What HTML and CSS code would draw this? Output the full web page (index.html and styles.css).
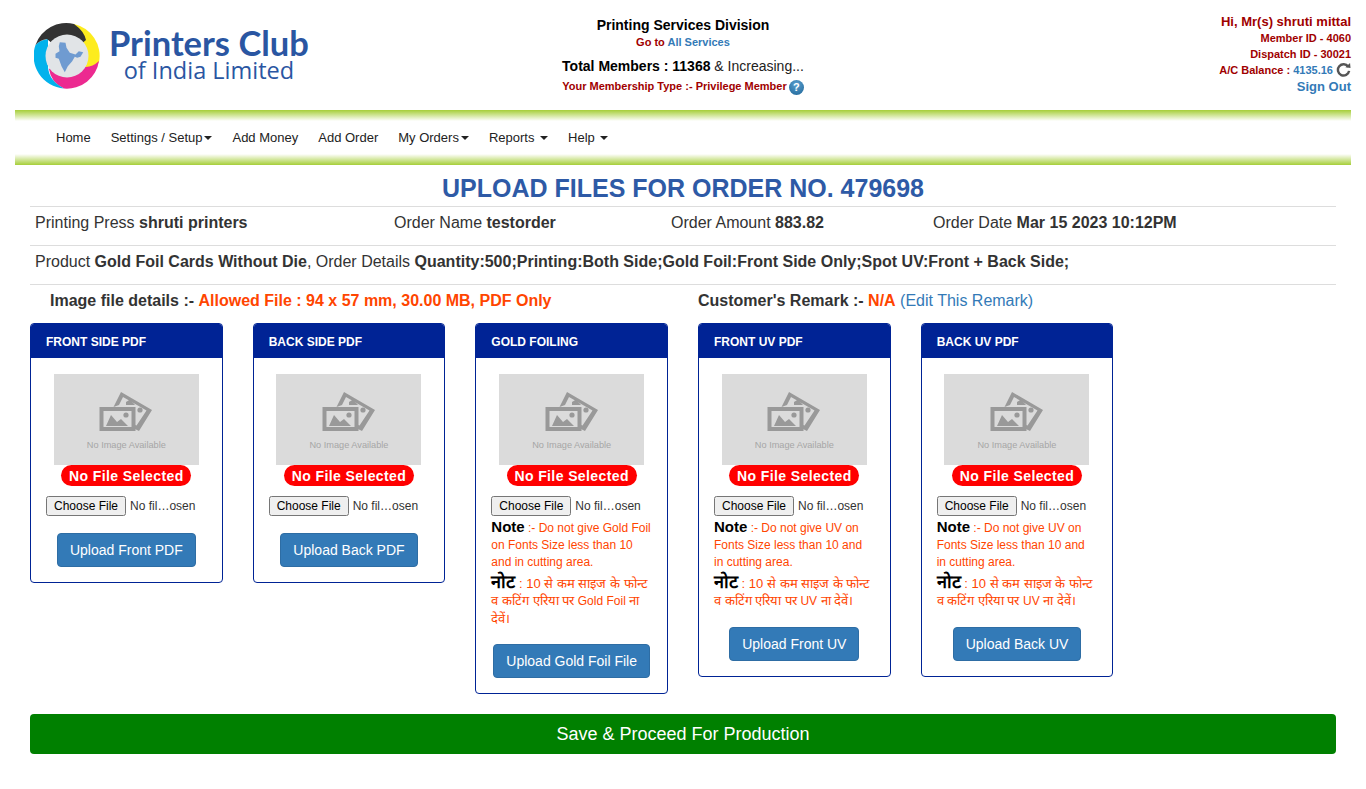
FILE: index.html
```html
<!DOCTYPE html>
<html lang="en">
<head>
  <meta charset="UTF-8">
  <meta name="viewport" content="width=device-width, initial-scale=1.0">
  <title>Upload Files</title>
  <link rel="stylesheet" href="styles.css">
</head>
<body>
  <svg class="defs" width="0" height="0">
    <symbol id="noimg" viewBox="0 0 54 42">
      <path d="M22 1 L53 19 L40 40 L36 38 L36 34 L37.5 34.5 L47.5 19.5 L24 6 L20 14 L14.5 16 Z" fill="#999"/>
      <path d="M27 11 L31 8.5 L36 14 H27 Z" fill="#999"/>
      <circle cx="41" cy="19" r="2.6" fill="#999"/>
      <path d="M0.5 16 H36.5 V40 H0.5 Z M4.5 20 V36 H32.5 V20 Z" fill="#999" fill-rule="evenodd"/>
      <path d="M7 35 L12 24 L18 31 L22 28 L29 35 Z" fill="#999"/>
      <circle cx="27" cy="24" r="2.6" fill="#999"/>
    </symbol>
  </svg>

  <header class="top">
    <a class="logo" href="#">
      <svg class="logo-mark" viewBox="0 0 66 66" width="66" height="66">
        <path d="M40 1 A32.5 32.5 0 0 1 65 39 Q60 48 48 50 L33 33 Z" fill="#fdec1e"/>
        <path d="M65 38 A32.5 32.5 0 0 1 30 65.5 Q17 60 15 46 L33 33 Q50 52 65 38 Z" fill="#ec2a90"/>
        <path d="M1.5 22 A32.5 32.5 0 0 0 30 65.4 Q15 58 14 44 L14 16 Q6 17 1.5 22 Z" fill="#02b2ec"/>
        <path d="M1.5 22 A32.5 32.5 0 0 1 40 1 Q50 8 52 17 L33 33 L13 16 Q6 17 1.5 22 Z" fill="#333"/>
        <circle cx="33" cy="33" r="21.5" fill="#e1e4e7"/>
        <path d="M25.8 19.2 L31.5 19.8 L32.5 24.8 L35.8 29.8 L41.5 31.5 L44.8 28.2 L49.2 29.2 L46.5 33.8 L43.2 34.8 L40.8 33.8 L38.2 38.2 L33.8 43.2 L30.8 49.2 L27.5 43.2 L24.8 35.8 L21.5 34.8 L21.5 30.8 L25.5 28.2 L24.8 23.2 Z" fill="#6f9bd1"/>
      </svg>
      <span class="logo-text">
        <span class="logo-name">Printers Club</span>
        <span class="logo-sub">of India Limited</span>
      </span>
    </a>

    <div class="top-center">
      <div class="division">Printing Services Division</div>
      <div class="goto">Go to <a href="#">All Services</a></div>
      <div class="members"><b>Total Members : 11368</b> &amp; Increasing...</div>
      <div class="memtype">Your Membership Type :- Privilege Member
        <span class="help">?</span>
      </div>
    </div>

    <div class="top-right">
      <div class="hi">Hi, Mr(s) shruti mittal</div>
      <div class="acct">Member ID - 4060</div>
      <div class="acct">Dispatch ID - 30021</div>
      <div class="acct">A/C Balance : <a href="#">4135.16</a>
        <svg class="refresh" viewBox="0 0 16 16" width="15" height="15">
          <path d="M13 5 A6 6 0 1 0 14 9.5" fill="none" stroke="#555" stroke-width="2.6"/>
          <path d="M10 5.5 L15.5 6.5 L15 1 Z" fill="#555"/>
        </svg>
      </div>
      <a class="signout" href="#">Sign Out</a>
    </div>
  </header>

  <nav class="menu">
    <a href="#">Home</a>
    <a class="tight" href="#">Settings / Setup<i class="caret"></i></a>
    <a href="#">Add Money</a>
    <a href="#">Add Order</a>
    <a class="tight" href="#">My Orders<i class="caret"></i></a>
    <a href="#">Reports <i class="caret"></i></a>
    <a href="#">Help <i class="caret"></i></a>
  </nav>

  <main class="content">
    <h1>UPLOAD FILES FOR ORDER NO. 479698</h1>

    <div class="info info-cols">
      <span>Printing Press <b>shruti printers</b></span>
      <span>Order Name <b>testorder</b></span>
      <span>Order Amount <b>883.82</b></span>
      <span>Order Date <b>Mar 15 2023 10:12PM</b></span>
    </div>
    <div class="info">
      Product <b>Gold Foil Cards Without Die</b>, Order Details <b>Quantity:500;Printing:Both Side;Gold Foil:Front Side Only;Spot UV:Front + Back Side;</b>
    </div>

    <div class="details">
      <div class="details-file"><b>Image file details :-</b> <strong>Allowed File : 94 x 57 mm, 30.00 MB, PDF Only</strong></div>
      <div><b>Customer's Remark :-</b> <strong>N/A</strong> <a href="#">(Edit This Remark)</a></div>
    </div>

    <div class="cards">
      <section class="card">
        <h2>FRONT SIDE PDF</h2>
        <div class="card-body">
          <div class="noimg"><svg width="54" height="42"><use href="#noimg"/></svg><span>No Image Available</span></div>
          <span class="badge">No File Selected</span>
          <input type="file" class="file">
          <button class="btn">Upload Front PDF</button>
        </div>
      </section>

      <section class="card">
        <h2>BACK SIDE PDF</h2>
        <div class="card-body">
          <div class="noimg"><svg width="54" height="42"><use href="#noimg"/></svg><span>No Image Available</span></div>
          <span class="badge">No File Selected</span>
          <input type="file" class="file">
          <button class="btn">Upload Back PDF</button>
        </div>
      </section>

      <section class="card">
        <h2>GOLD FOILING</h2>
        <div class="card-body">
          <div class="noimg"><svg width="54" height="42"><use href="#noimg"/></svg><span>No Image Available</span></div>
          <span class="badge">No File Selected</span>
          <input type="file" class="file">
          <p class="note"><b>Note</b> :- Do not give Gold Foil on Fonts Size less than 10 and in cutting area.</p>
          <p class="note note-hindi"><b>नोट</b> : 10 से कम साइज के फोन्ट व कटिंग एरिया पर <span>Gold Foil</span> ना देवें।</p>
          <button class="btn">Upload Gold Foil File</button>
        </div>
      </section>

      <section class="card">
        <h2>FRONT UV PDF</h2>
        <div class="card-body">
          <div class="noimg"><svg width="54" height="42"><use href="#noimg"/></svg><span>No Image Available</span></div>
          <span class="badge">No File Selected</span>
          <input type="file" class="file">
          <p class="note"><b>Note</b> :- Do not give UV on Fonts Size less than 10 and in cutting area.</p>
          <p class="note note-hindi"><b>नोट</b> : 10 से कम साइज के फोन्ट व कटिंग एरिया पर <span>UV</span> ना देवें।</p>
          <button class="btn">Upload Front UV</button>
        </div>
      </section>

      <section class="card">
        <h2>BACK UV PDF</h2>
        <div class="card-body">
          <div class="noimg"><svg width="54" height="42"><use href="#noimg"/></svg><span>No Image Available</span></div>
          <span class="badge">No File Selected</span>
          <input type="file" class="file">
          <p class="note"><b>Note</b> :- Do not give UV on Fonts Size less than 10 and in cutting area.</p>
          <p class="note note-hindi"><b>नोट</b> : 10 से कम साइज के फोन्ट व कटिंग एरिया पर <span>UV</span> ना देवें।</p>
          <button class="btn">Upload Back UV</button>
        </div>
      </section>
    </div>

    <button class="save">Save &amp; Proceed For Production</button>
  </main>
</body>
</html>
```

FILE: styles.css
```css
* {
  box-sizing: border-box;
}
body {
  margin: 0;
  font-family: "Liberation Sans", Arial, sans-serif;
  font-size: 14px;
  color: #333;
  background: #fff;
}
a {
  color: #337ab7;
  text-decoration: none;
}
.defs {
  position: absolute;
}

/* header */
.top {
  display: grid;
  grid-template-columns: 1fr auto 1fr;
  height: 110px;
  padding: 0 15px;
}
.logo {
  display: flex;
  align-items: flex-start;
  gap: 9px;
  padding: 23px 0 0 19px;
}
.logo-text {
  display: flex;
  flex-direction: column;
  align-items: center;
  color: #2a56a2;
}
.logo-name {
  margin-top: 2px;
  font-family: Lato, sans-serif;
  font-size: 34.5px;
  font-weight: 700;
  line-height: 36px;
}
.logo-sub {
  margin-top: -4px;
  font-family: "Open Sans", sans-serif;
  font-size: 23.5px;
  line-height: 26px;
}
.top-center {
  padding-top: 17px;
  text-align: center;
}
.division {
  font-weight: 700;
  color: #000;
  line-height: 16px;
}
.goto {
  margin-top: 2px;
  font-size: 11px;
  font-weight: 700;
  line-height: 14px;
  color: #a00000;
}
.members {
  margin-top: 8px;
  line-height: 18px;
  color: #222;
}
.members b {
  color: #000;
}
.memtype {
  margin-top: 3px;
  font-size: 11px;
  font-weight: 700;
  line-height: 16px;
  color: #a00000;
}
.help {
  display: inline-block;
  width: 15px;
  height: 15px;
  margin-left: -1px;
  border-radius: 50%;
  background: radial-gradient(circle at 50% 30%, #5aa0d0, #1d6496);
  color: #fff;
  font-size: 11px;
  line-height: 15px;
  vertical-align: middle;
}
.top-right {
  padding-top: 13px;
  text-align: right;
  font-weight: 700;
  font-size: 13px;
  color: #a00000;
}
.hi {
  line-height: 17px;
}
.acct {
  font-size: 11px;
  line-height: 16px;
}
.refresh {
  vertical-align: -3px;
}
.signout {
  display: block;
  line-height: 18px;
}

/* menu */
.menu {
  display: flex;
  height: 55px;
  margin: 0 15px;
  padding: 0 21px 1px 31px;
  align-items: center;
  font-size: 13px;
  background:
    linear-gradient(#a6ce39, #fff) top / 100% 11px no-repeat,
    linear-gradient(#fff, #a6ce39) bottom / 100% 11px no-repeat;
}
.menu a {
  padding: 0 10px;
  color: #222;
}
.caret {
  display: inline-block;
  margin-left: 2px;
  border-top: 4px solid #222;
  border-left: 4px solid transparent;
  border-right: 4px solid transparent;
  vertical-align: middle;
}

/* main */
.content {
  padding: 0 30px;
}
h1 {
  margin: 0;
  height: 41px;
  padding-top: 8px;
  font-size: 25px;
  line-height: 30px;
  text-align: center;
  color: #2e5aa6;
}
.info {
  height: 39px;
  padding: 7px 5px 0;
  border-top: 1px solid #ddd;
  font-size: 16px;
  line-height: 18px;
}
.info-cols {
  display: grid;
  grid-template-columns: 359px 277px 262px 1fr;
}
.details {
  display: grid;
  grid-template-columns: 668px 1fr;
  height: 39px;
  padding-top: 6px;
  border-top: 1px solid #ddd;
  font-size: 16px;
  line-height: 20px;
}
.details-file {
  padding-left: 20px;
}
.details strong {
  color: #ff4500;
}
.cards {
  display: grid;
  grid-template-columns: repeat(6, 1fr);
  gap: 30px;
  align-items: start;
}
.card {
  border: 1px solid #002395;
  border-radius: 4px;
  overflow: hidden;
}
.card h2 {
  margin: 0;
  height: 34px;
  padding: 1px 15px 0;
  background: #002395;
  color: #fff;
  font-size: 12px;
  line-height: 34px;
}
.card-body {
  display: flex;
  flex-direction: column;
  padding: 16px 15px 15px;
}
.noimg {
  display: flex;
  flex-direction: column;
  align-items: center;
  width: 145px;
  height: 91px;
  margin: 0 auto;
  padding-top: 17px;
  background: #dbdbdb;
  color: #a6a6a6;
  font-size: 9.2px;
}
.noimg span {
  margin-top: 7px;
}
.badge {
  align-self: center;
  width: 130px;
  height: 21px;
  border-radius: 11px;
  background: #f00;
  color: #fff;
  font-size: 14px;
  font-weight: 700;
  line-height: 22px;
  letter-spacing: 0.4px;
  text-align: center;
}
.file {
  width: 151px;
  margin-top: 10px;
  font-family: inherit;
  font-size: 12px;
}
.note {
  margin: 4px 0 0;
  color: #ff4500;
  font-size: 12px;
  line-height: 17px;
}
.note b {
  color: #000;
  font-size: 15px;
  line-height: 14px;
}
.note-hindi {
  margin-top: 4px;
  font-size: 13px;
}
.note-hindi b {
  font-size: 18px;
}
.note-hindi span {
  font-size: 12px;
}
.btn {
  align-self: center;
  height: 34px;
  margin-top: 17px;
  padding: 6px 12px;
  border: 1px solid #2e6da4;
  border-radius: 4px;
  background: #337ab7;
  color: #fff;
  font-family: inherit;
  font-size: 14px;
}
.save {
  display: block;
  width: 100%;
  height: 40px;
  margin-top: 20px;
  border: 0;
  border-radius: 4px;
  background: #008000;
  color: #fff;
  font-family: inherit;
  font-size: 18px;
}
```
